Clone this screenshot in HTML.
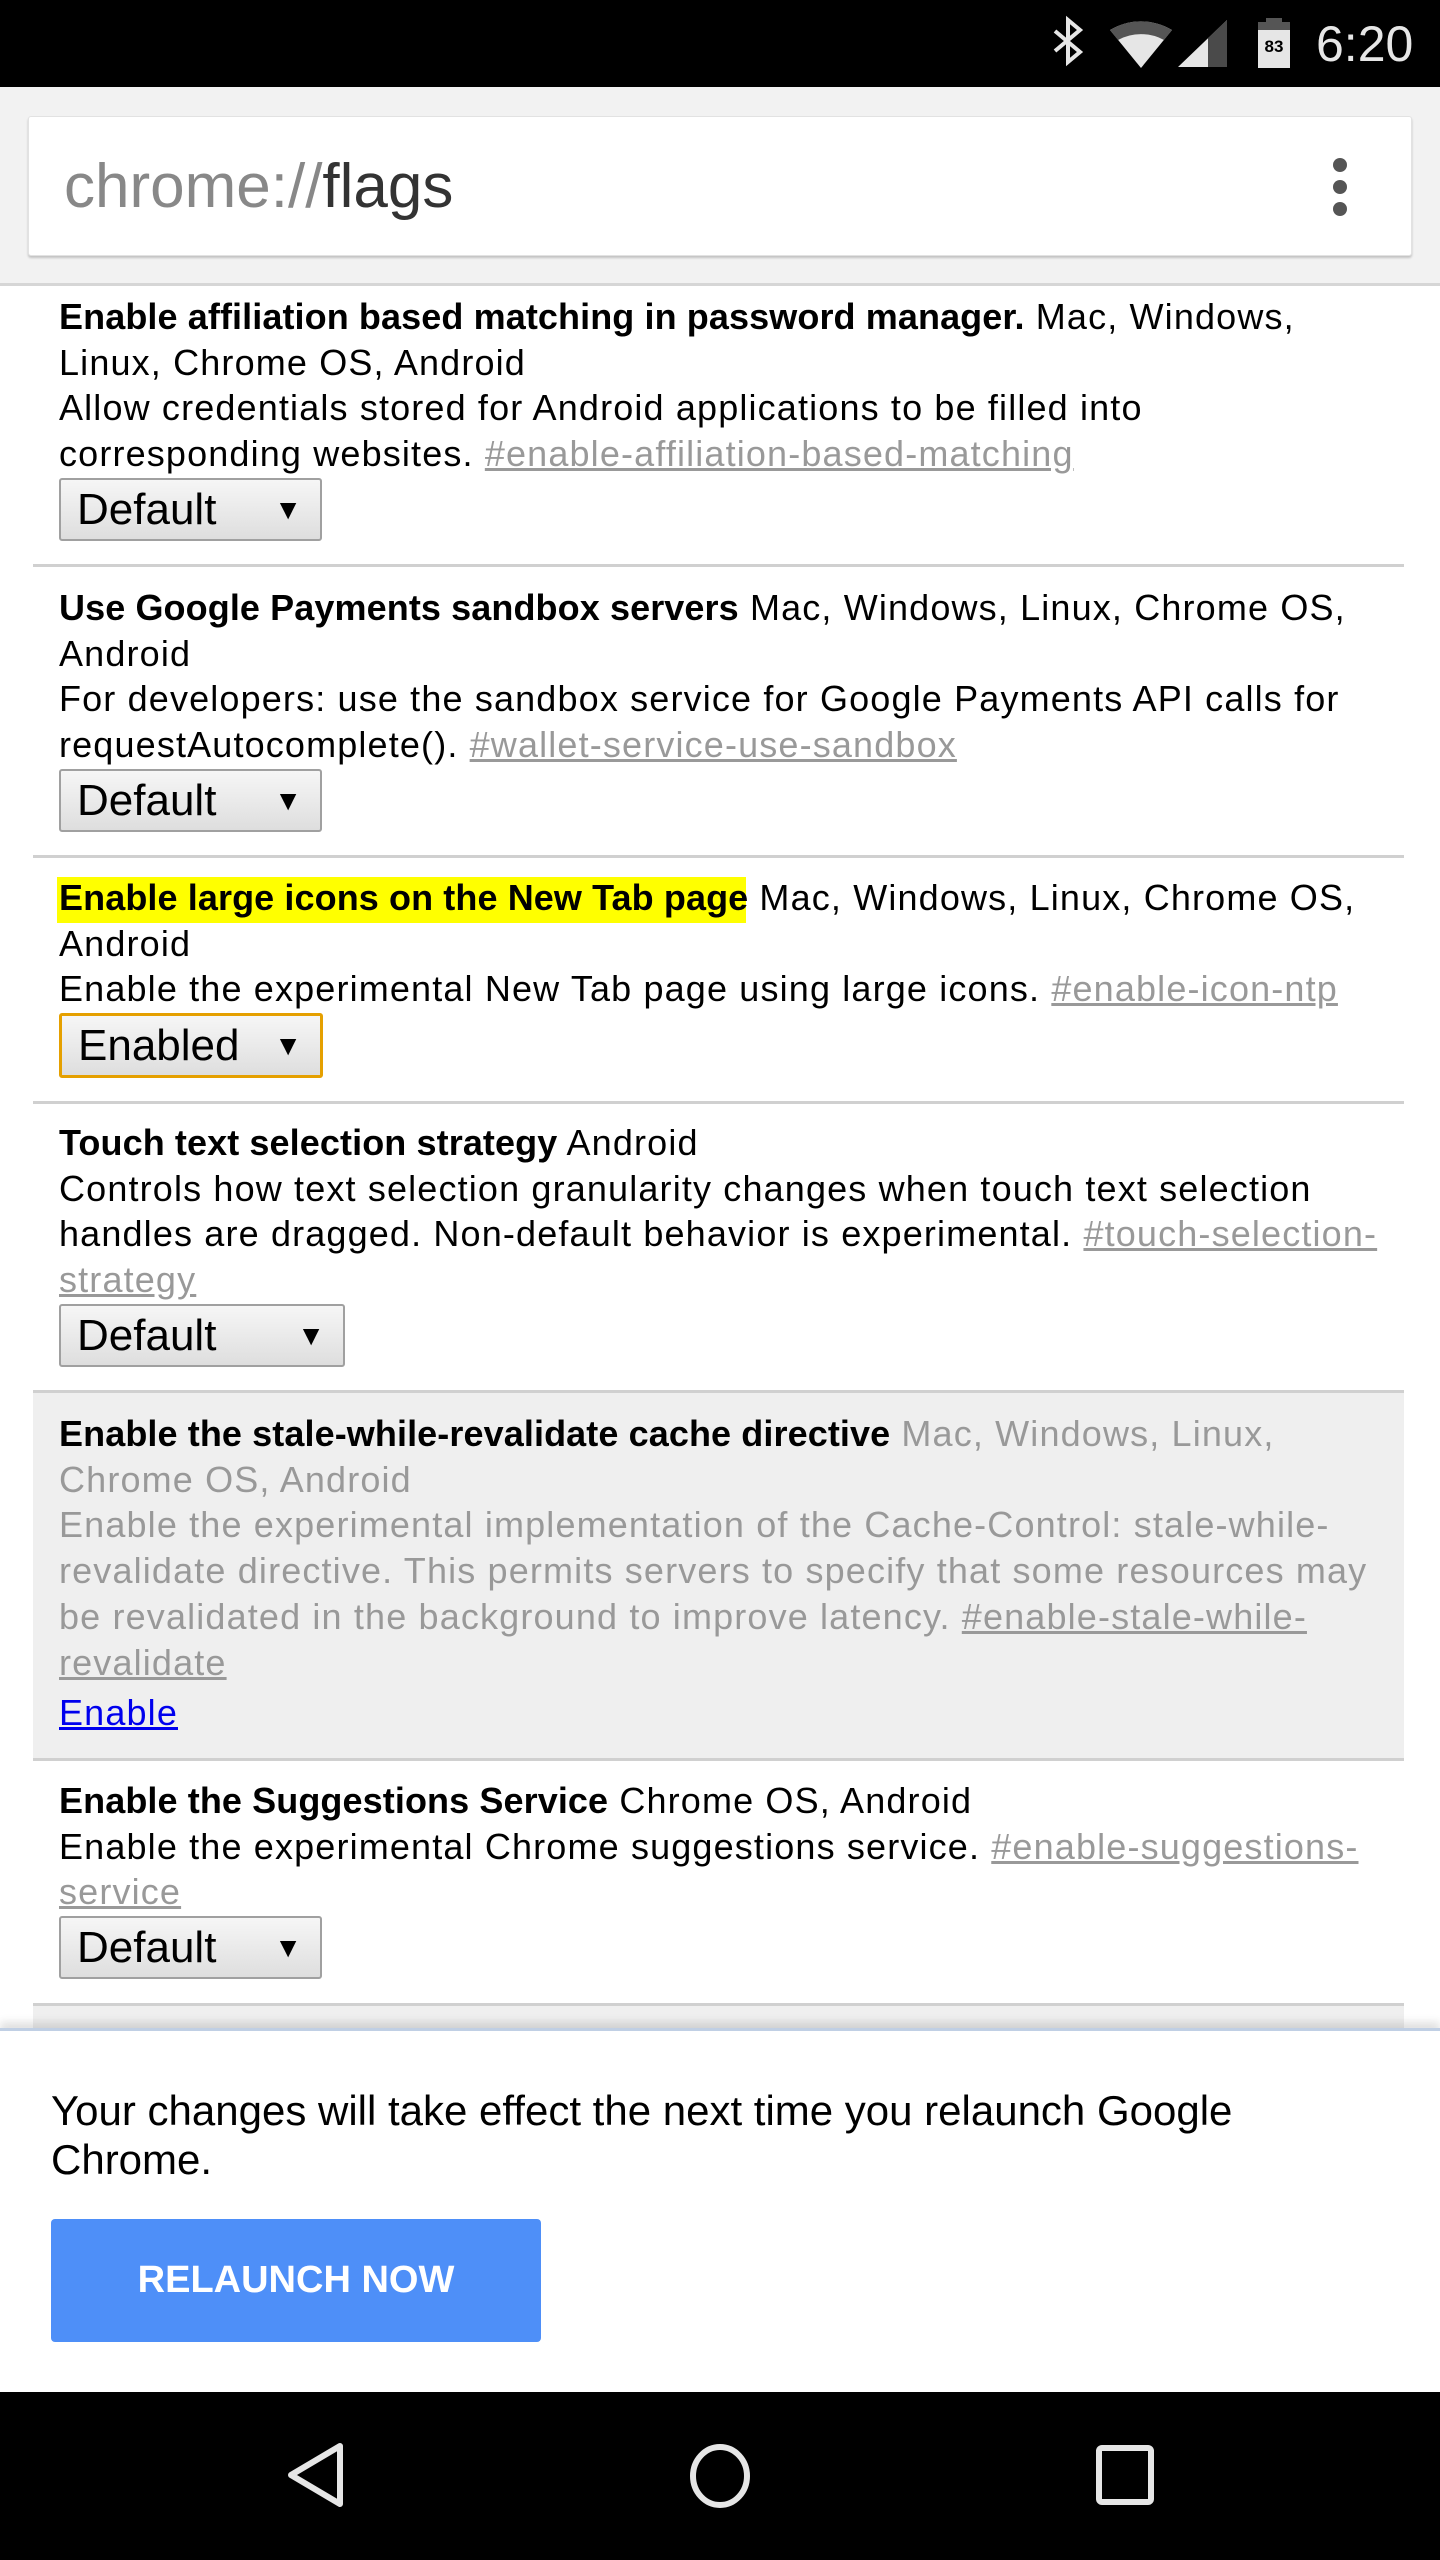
<!DOCTYPE html>
<html><head><meta charset="utf-8">
<style>
*{margin:0;padding:0;box-sizing:border-box}
html,body{width:1440px;height:2560px;overflow:hidden;background:#fff;font-family:"Liberation Sans",sans-serif}
.abs{position:absolute}
.sec{position:absolute;left:59px;font-size:36px;line-height:45.7px;color:#000;white-space:nowrap;letter-spacing:1.15px}
.sec b{font-weight:bold;letter-spacing:0.1px}
.lnk{color:#999;text-decoration:underline}
.sep{position:absolute;left:33px;width:1371px;height:3px;background:#d0d0d0}
.sel{position:absolute;left:59px;height:63px;border:2px solid #a0a0a0;border-radius:3px;background:linear-gradient(#f6f6f6,#dedede);font-size:44px;line-height:59px;padding-left:16px;color:#000}
.sel .ar{position:absolute;right:18px;top:0;font-size:28px}
</style></head><body>
<div class="abs" style="left:0;top:0;width:1440px;height:87px;background:#000"></div>
<svg class="abs" style="left:1040px;top:14px" width="400" height="60" viewBox="0 0 400 60">
  <path d="M15 17 L40 38 L28 48 L28 6 L40 16 L15 37" stroke="#e6e6e6" stroke-width="4" fill="none"/>
  <path d="M70 16 A60 60 0 0 1 132 16 L101 54 Z" fill="#e6e6e6"/>
  <path d="M70 16 A60 60 0 0 1 132 16 L124 26 A48 48 0 0 0 78 26 Z" fill="#555"/>
  <path d="M138 53 L187 6 L187 53 Z" fill="#e6e6e6"/>
  <path d="M168 24 L187 6 L187 53 L168 53 Z" fill="#4a4a4a"/>
  <rect x="218" y="8" width="32" height="46" fill="#e6e6e6"/>
  <rect x="226" y="4" width="16" height="6" fill="#555"/>
  <rect x="218" y="8" width="32" height="8" fill="#555"/>
  <text x="234" y="38" font-family="Liberation Sans" font-size="17" font-weight="bold" text-anchor="middle" fill="#000">83</text>
</svg>
<div class="abs" style="left:1316px;top:14px;font-size:50px;color:#e6e6e6;line-height:60px">6:20</div>
<div class="abs" style="left:0;top:87px;width:1440px;height:199px;background:#f2f2f2;border-bottom:3px solid #d6d6d6"></div>
<div class="abs" style="left:28px;top:116px;width:1384px;height:140px;background:#fff;border:1px solid #e2e2e2;box-shadow:0 2px 2px rgba(0,0,0,.2);border-radius:3px"></div>
<div class="abs" style="left:64px;top:152px;font-size:62px;line-height:70px;color:#888">chrome://<span style="color:#333">flags</span></div>
<div class="abs" style="left:1333px;top:158px;width:14px;height:14px;border-radius:50%;background:#555"></div>
<div class="abs" style="left:1333px;top:180px;width:14px;height:14px;border-radius:50%;background:#555"></div>
<div class="abs" style="left:1333px;top:202px;width:14px;height:14px;border-radius:50%;background:#555"></div>

<div class="sec" style="top:294px"><b>Enable affiliation based matching in password manager.</b> Mac, Windows,<br>Linux, Chrome OS, Android<br>Allow credentials stored for Android applications to be filled into<br>corresponding websites. <span class="lnk">#enable-affiliation-based-matching</span></div>
<div class="sel" style="top:478px;width:263px">Default<span class="ar">▼</span></div>
<div class="sep" style="top:564px"></div>
<div class="sec" style="top:585px"><b>Use Google Payments sandbox servers</b> Mac, Windows, Linux, Chrome OS,<br>Android<br>For developers: use the sandbox service for Google Payments API calls for<br>requestAutocomplete(). <span class="lnk">#wallet-service-use-sandbox</span></div>
<div class="sel" style="top:769px;width:263px">Default<span class="ar">▼</span></div>
<div class="sep" style="top:855px"></div>
<div class="abs" style="left:57px;top:877px;width:689px;height:46px;background:#ffff00"></div>
<div class="sec" style="top:875px"><b>Enable large icons on the New Tab page</b> Mac, Windows, Linux, Chrome OS,<br>Android<br>Enable the experimental New Tab page using large icons. <span class="lnk">#enable-icon-ntp</span></div>
<div class="sel" style="top:1013px;width:264px;height:65px;border:3px solid #e5a000;line-height:59px">Enabled<span class="ar">▼</span></div>
<div class="sep" style="top:1101px"></div>
<div class="sec" style="top:1120px"><b>Touch text selection strategy</b> Android<br>Controls how text selection granularity changes when touch text selection<br>handles are dragged. Non-default behavior is experimental. <span class="lnk">#touch-selection-</span><br><span class="lnk">strategy</span></div>
<div class="sel" style="top:1304px;width:286px">Default<span class="ar">▼</span></div>
<div class="sep" style="top:1390px"></div>
<div class="abs" style="left:33px;top:1393px;width:1371px;height:366px;background:#efefef"></div>
<div class="sec" style="top:1411px;color:#999"><b style="color:#000">Enable the stale-while-revalidate cache directive</b> Mac, Windows, Linux,<br>Chrome OS, Android<br>Enable the experimental implementation of the Cache-Control: stale-while-<br>revalidate directive. This permits servers to specify that some resources may<br>be revalidated in the background to improve latency. <span class="lnk">#enable-stale-while-</span><br><span class="lnk">revalidate</span></div>
<div class="sec" style="top:1690px;color:#00e;text-decoration:underline">Enable</div>
<div class="sep" style="top:1758px"></div>
<div class="sec" style="top:1778px"><b>Enable the Suggestions Service</b> Chrome OS, Android<br>Enable the experimental Chrome suggestions service. <span class="lnk">#enable-suggestions-</span><br><span class="lnk">service</span></div>
<div class="sel" style="top:1916px;width:263px">Default<span class="ar">▼</span></div>
<div class="sep" style="top:2003px"></div>
<div class="abs" style="left:33px;top:2006px;width:1371px;height:24px;background:#efefef"></div>
<div class="abs" style="left:0;top:2028px;width:1440px;height:364px;background:#fff;border-top:3px solid #c0cfe4;box-shadow:0 -6px 8px rgba(0,0,0,.12)"></div>
<div class="abs" style="left:51px;top:2086px;font-size:42px;line-height:49px;color:#000">Your changes will take effect the next time you relaunch Google<br>Chrome.</div>
<div class="abs" style="left:51px;top:2219px;width:490px;height:123px;background:#4e8ff8;border-radius:4px;color:#fff;font-weight:bold;font-size:38px;line-height:123px;text-align:center">RELAUNCH NOW</div>
<div class="abs" style="left:0;top:2392px;width:1440px;height:168px;background:#000"></div>
<svg class="abs" style="left:0;top:2392px" width="1440" height="168">
  <path d="M340 54 L340 112 L291 83 Z" stroke="#e6e6e6" stroke-width="6" fill="none" stroke-linejoin="round"/>
  <ellipse cx="720" cy="84" rx="27" ry="29" stroke="#e6e6e6" stroke-width="6" fill="none"/>
  <rect x="1099" y="56" width="52" height="54" rx="3" stroke="#e6e6e6" stroke-width="6" fill="none"/>
</svg>
</body></html>
